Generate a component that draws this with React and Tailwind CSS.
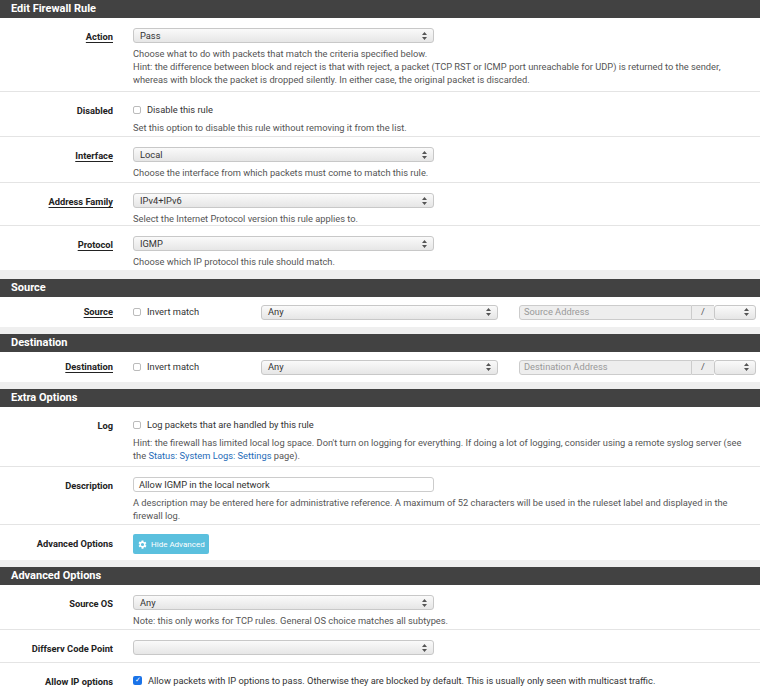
const Arrows = () => (
  <svg width="5" height="8" viewBox="0 0 5 8" fill="#555">
    <path d="M2.5 0L5 3H0z M2.5 8L0 5h5z" />
  </svg>
);

const Sel = ({ value, w = "w-[301px]" }) => (
  <div className={`${w} h-[15px] rounded-[3px] border border-[#c8c8c8] bg-gradient-to-b from-[#fafafa] to-[#e6e6e6] flex items-center justify-between px-[6px] text-[#333]`}>
    <span>{value}</span>
    <Arrows />
  </div>
);

const Box = ({ checked }) =>
  checked ? (
    <span className="w-[9px] h-[9px] rounded-[2px] bg-[#1a73e8] flex items-center justify-center text-white text-[7px] leading-none">✓</span>
  ) : (
    <span className="w-[8px] h-[8px] rounded-[2px] border border-[#bbb] bg-white" />
  );

const Header = ({ children }) => (
  <div className="h-[18px] bg-[#424242] text-white font-bold text-[11px] px-[11px] flex items-center">{children}</div>
);

const Row = ({ label, u, h, children, last }) => (
  <div className={`flex ${h} ${last ? "" : "border-b border-[#e4e4e4]"}`}>
    <div className="w-[113px] shrink-0 text-right pt-[12px] font-bold text-[#222]">
      <span className={u ? "underline underline-offset-2" : ""}>{label}</span>
    </div>
    <div className="pl-[20px] pt-[10px] pr-[6px] flex-1 text-[#555] leading-[13px]">{children}</div>
  </div>
);

const Help = ({ children }) => <div className="mt-[4px]">{children}</div>;

const Check = ({ checked, children }) => (
  <div className="flex items-center gap-[6px] h-[15px] text-[#333]">
    <Box checked={checked} />
    <span>{children}</span>
  </div>
);

const AddrRow = ({ label, ph }) => (
  <div className="flex h-[30px] items-center">
    <div className="w-[113px] shrink-0 text-right font-bold text-[#222]">
      <span className="underline underline-offset-2">{label}</span>
    </div>
    <div className="pl-[20px] w-[148px] shrink-0"><Check>Invert match</Check></div>
    <Sel value="Any" w="w-[237px]" />
    <div className="ml-[21px] w-[173px] h-[15px] border border-[#ccc] bg-[#eee] rounded-l-[3px] text-[#999] px-[4px] flex items-center">{ph}</div>
    <div className="w-[22px] h-[15px] border-y border-[#ccc] bg-[#eee] text-[#555] flex items-center justify-center">/</div>
    <Sel value="" w="w-[42px]" />
  </div>
);

export default function App() {
  return (
    <div className="bg-[#efefef] min-h-[694px] text-[9.3px]" style={{ fontFamily: "Roboto, 'Liberation Sans', sans-serif" }}>
      <div className="bg-white">
        <Header>Edit Firewall Rule</Header>
        <Row label="Action" u h="h-[74px]">
          <Sel value="Pass" />
          <Help>
            Choose what to do with packets that match the criteria specified below.<br />
            Hint: the difference between block and reject is that with reject, a packet (TCP RST or ICMP port unreachable for UDP) is returned to the sender, whereas with block the packet is dropped silently. In either case, the original packet is discarded.
          </Help>
        </Row>
        <Row label="Disabled" h="h-[45px]">
          <Check>Disable this rule</Check>
          <Help>Set this option to disable this rule without removing it from the list.</Help>
        </Row>
        <Row label="Interface" u h="h-[46px]">
          <Sel value="Local" />
          <Help>Choose the interface from which packets must come to match this rule.</Help>
        </Row>
        <Row label="Address Family" u h="h-[43px]">
          <Sel value="IPv4+IPv6" />
          <Help>Select the Internet Protocol version this rule applies to.</Help>
        </Row>
        <Row label="Protocol" u h="h-[44px]" last>
          <Sel value="IGMP" />
          <Help>Choose which IP protocol this rule should match.</Help>
        </Row>
      </div>
      <div className="h-[9px]" />
      <div className="bg-white">
        <Header>Source</Header>
        <AddrRow label="Source" ph="Source Address" />
      </div>
      <div className="h-[7px]" />
      <div className="bg-white">
        <Header>Destination</Header>
        <AddrRow label="Destination" ph="Destination Address" />
      </div>
      <div className="h-[7px]" />
      <div className="bg-white">
        <Header>Extra Options</Header>
        <Row label="Log" h="h-[60px]">
          <Check>Log packets that are handled by this rule</Check>
          <Help>
            Hint: the firewall has limited local log space. Don't turn on logging for everything. If doing a lot of logging, consider using a remote syslog server (see the <span className="text-[#1e6bb8]">Status: System Logs: Settings</span> page).
          </Help>
        </Row>
        <Row label="Description" h="h-[58px]">
          <div className="w-[301px] h-[15px] border border-[#ccc] rounded-[3px] px-[5px] flex items-center text-[#333]">Allow IGMP in the local network</div>
          <Help>A description may be entered here for administrative reference. A maximum of 52 characters will be used in the ruleset label and displayed in the firewall log.</Help>
        </Row>
        <Row label="Advanced Options" h="h-[35px]" last>
          <div className="-mt-[1px] inline-flex items-center gap-[3px] h-[20px] px-[4px] rounded-[2px] bg-[#5bc0de] text-white text-[8px]">
            <svg width="11" height="11" viewBox="0 0 24 24" fill="white">
              <path d="M19.4 13a7.5 7.5 0 0 0 0-2l2.1-1.6-2-3.5-2.5 1a7 7 0 0 0-1.7-1L15 3h-4l-.4 2.7a7 7 0 0 0-1.7 1l-2.5-1-2 3.5L6.6 11a7.5 7.5 0 0 0 0 2l-2.1 1.6 2 3.5 2.5-1a7 7 0 0 0 1.7 1L11 21h4l.4-2.7a7 7 0 0 0 1.7-1l2.5 1 2-3.5zM13 15.5a3.5 3.5 0 1 1 0-7 3.5 3.5 0 0 1 0 7z" transform="translate(-1 0)" />
            </svg>
            Hide Advanced
          </div>
        </Row>
      </div>
      <div className="h-[7px]" />
      <div className="bg-white">
        <Header>Advanced Options</Header>
        <Row label="Source OS" h="h-[45px]">
          <Sel value="Any" />
          <Help>Note: this only works for TCP rules. General OS choice matches all subtypes.</Help>
        </Row>
        <Row label="Diffserv Code Point" h="h-[33px]">
          <Sel value="" />
        </Row>
        <Row label="Allow IP options" h="h-[31px]" last>
          <Check checked>Allow packets with IP options to pass. Otherwise they are blocked by default. This is usually only seen with multicast traffic.</Check>
        </Row>
      </div>
    </div>
  );
}
